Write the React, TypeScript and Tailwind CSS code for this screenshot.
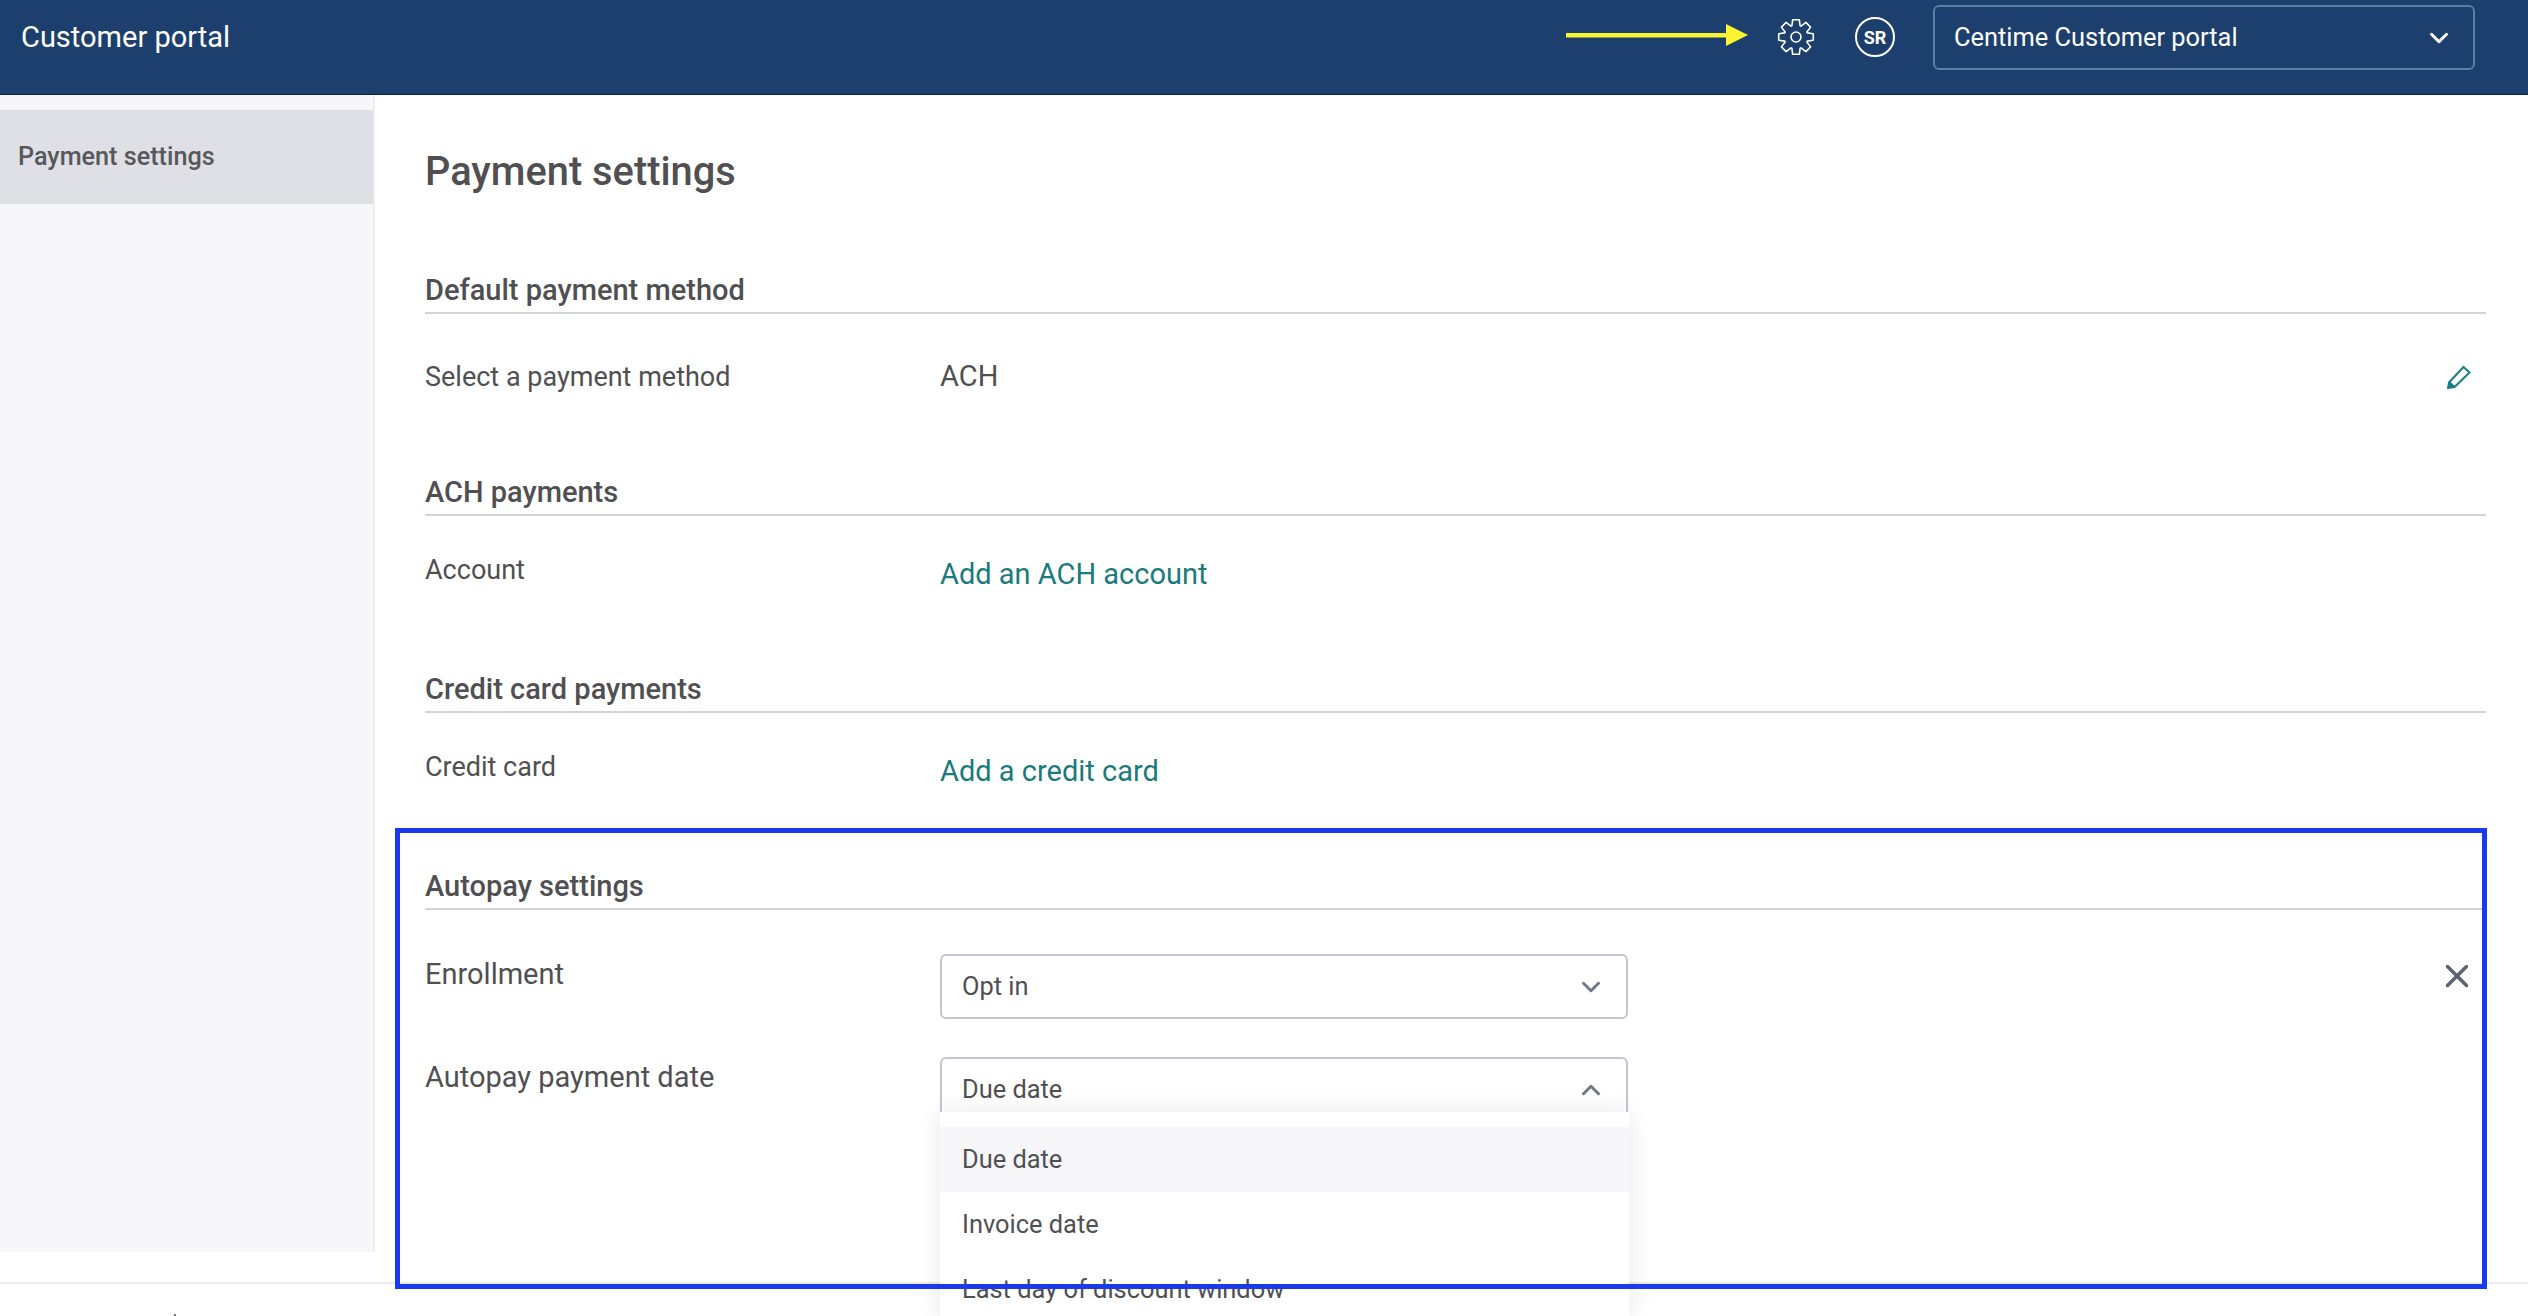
import React from "react";
import { ChevronDown, ChevronUp, X } from "lucide-react";

function SectionTitle({ children, className }: { children: React.ReactNode; className: string }) {
  return (
    <div className={`border-b-2 border-[#d3d4da] h-[40px] text-[29px] leading-[33px] font-medium text-[#505053] ${className}`}>
      {children}
    </div>
  );
}

function Pencil() {
  return (
    <svg width="24" height="24" viewBox="0 0 24 24" fill="none">
      <path d="M2 17.5 L16.5 2 L22.5 7.5 L7.5 22 L1 23 Z" stroke="#1a7f82" strokeWidth="2" fill="none" strokeLinejoin="miter" />
      <path d="M1 23 L2 15.5 L8.5 21.5 Z" fill="#1a7f82" />
    </svg>
  );
}

function Gear() {
  const teeth = 8;
  const cx = 19;
  const cy = 19;
  let d = "";
  for (let i = 0; i < teeth; i++) {
    const a = (i * 2 * Math.PI) / teeth - Math.PI / 2;
    const w = 0.25;
    const pts = [
      [12, a - w - 0.1],
      [17.6, a - w + 0.06],
      [17.6, a + w - 0.06],
      [12, a + w + 0.1],
    ];
    pts.forEach(([r, t], j) => {
      const x = (cx + r * Math.cos(t)).toFixed(2);
      const y = (cy + r * Math.sin(t)).toFixed(2);
      d += `${i === 0 && j === 0 ? "M" : "L"}${x} ${y} `;
    });
  }
  d += "Z";
  return (
    <svg className="mt-[18px]" width="38" height="38" viewBox="0 0 38 38" fill="none" stroke="white" strokeWidth="1.6" strokeLinejoin="round">
      <path d={d} />
      <circle cx="19" cy="19" r="5" />
    </svg>
  );
}

function Select({ value, open }: { value: string; open?: boolean }) {
  return (
    <div className="w-[688px] h-[65px] border-2 border-[#c3c6d2] rounded-md bg-white flex items-center justify-between pl-[20px] pr-[20px] text-[25.4px] text-[#505053]">
      <span>{value}</span>
      {open ? (
        <ChevronUp className="w-[30px] h-[30px] text-[#737786]" strokeWidth={2.4} />
      ) : (
        <ChevronDown className="w-[30px] h-[30px] text-[#737786]" strokeWidth={2.4} />
      )}
    </div>
  );
}

export default function App() {
  return (
    <div className="relative w-[2528px] h-[1316px] overflow-hidden bg-white" style={{ fontFamily: "Roboto, sans-serif" }}>
      <header className="h-[95px] bg-[#1c3f6e] border-b border-[#0b1f55] flex items-start justify-between text-white">
        <div className="pl-[21px] pt-[18px] text-[29px] leading-[38px]">Customer portal</div>
        <div className="flex items-start pr-[53px]">
          <Gear />
          <div className="ml-[40px] mt-[17px] w-[40px] h-[40px] rounded-full border-2 border-white flex items-center justify-center text-[18px] font-bold">
            SR
          </div>
          <div className="ml-[38px] mt-[5px] w-[542px] h-[65px] rounded-md border-2 border-[#5b7f9e] flex items-center justify-between pl-[19px] pr-[19px] text-[25.4px]">
            <span>Centime Customer portal</span>
            <ChevronDown className="w-[30px] h-[30px]" strokeWidth={2.4} />
          </div>
        </div>
      </header>

      <div className="flex h-[1157px]">
        <aside className="w-[375px] bg-[#f7f7f9] border-r-2 border-[#eeeef0] pt-[15px] shrink-0">
          <div className="h-[94px] bg-[#dfe0e5] pl-[18px] pb-[1px] flex items-center text-[25.2px] font-medium text-[#58585b]">
            Payment settings
          </div>
        </aside>
        <main className="flex-1 pl-[50px] pr-[42px] text-[#505053]">
          <h1 className="mt-[54px] text-[39.8px] leading-[46px] font-medium text-[#505053]">Payment settings</h1>

          <SectionTitle className="mt-[79px]">Default payment method</SectionTitle>
          <div className="mt-[45px] flex items-center h-[36px] text-[27px]">
            <div className="w-[515px]">Select a payment method</div>
            <div className="flex-1 text-[29px]">ACH</div>
            <div className="mr-[15px]">
              <Pencil />
            </div>
          </div>

          <SectionTitle className="mt-[81px]">ACH payments</SectionTitle>
          <div className="mt-[36px] flex items-start text-[27px]">
            <div className="w-[515px] leading-[37px]">Account</div>
            <div className="text-[29px] leading-[38px] mt-[3px] text-[#1a7a7c]">Add an ACH account</div>
          </div>

          <SectionTitle className="mt-[80px]">Credit card payments</SectionTitle>
          <div className="mt-[36px] flex items-start text-[27px]">
            <div className="w-[515px] leading-[37px]">Credit card</div>
            <div className="text-[29px] leading-[38px] mt-[3px] text-[#1a7a7c]">Add a credit card</div>
          </div>

          <SectionTitle className="mt-[80px]">Autopay settings</SectionTitle>
          <div className="mt-[44px] flex items-start text-[29px]">
            <div className="w-[515px] leading-[40px]">Enrollment</div>
            <Select value="Opt in" />
            <X className="ml-auto mr-[10px] mt-[3px] w-[38px] h-[38px] text-[#5c6270]" strokeWidth={2.2} />
          </div>
          <div className="mt-[38px] flex items-start text-[29px]">
            <div className="w-[515px] leading-[40px]">Autopay payment date</div>
            <div className="relative">
              <Select value="Due date" open />
              <div className="absolute left-0 top-[55px] w-[689px] bg-white pt-[15px] shadow-[0_0_24px_rgba(0,0,0,0.09)] text-[25.4px] text-[#505053]">
                <div className="h-[65px] bg-[#f7f7f9] pl-[22px] flex items-center">Due date</div>
                <div className="h-[65px] pl-[22px] flex items-center">Invoice date</div>
                <div className="h-[65px] pl-[22px] flex items-center">Last day of discount window</div>
              </div>
            </div>
          </div>
        </main>
      </div>

      <div className="mt-[30px] border-t-2 border-[#ececee]" />
      <div className="absolute left-[174px] top-[1314px] w-[2px] h-[2px] bg-[#77777a]" />

      <div className="pointer-events-none absolute left-[395px] top-[828px] w-[2092px] h-[461px] border-[5px] border-[#1a3af0]" />
      <svg className="absolute left-[1566px] top-[23px]" width="184" height="24" viewBox="0 0 184 24">
        <rect x="0" y="10" width="162" height="4.5" fill="#fbf430" />
        <path d="M160 1 L182 12 L160 23 Z" fill="#fbf430" />
      </svg>
    </div>
  );
}
